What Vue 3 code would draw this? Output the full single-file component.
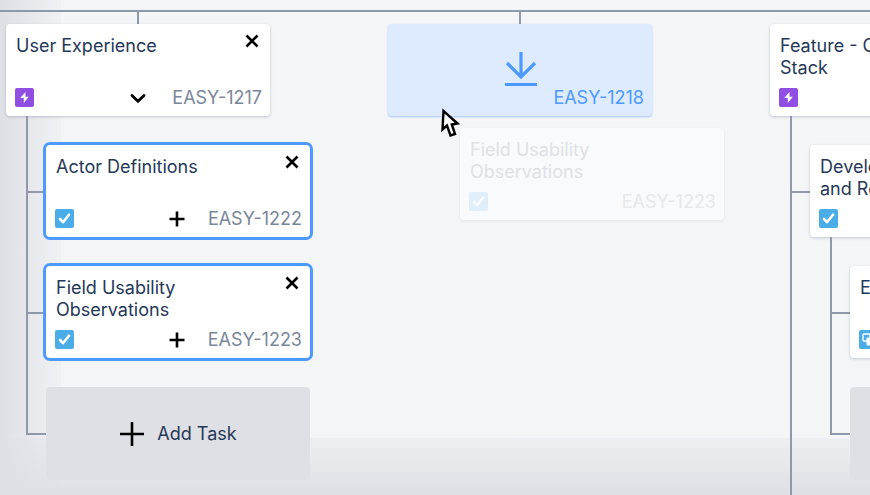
<script setup>
// Without a node the component draws the whole board; with one it draws
// that card and, below it, the tree of its children.
defineOptions({ name: 'App' })
defineProps({ node: { type: Object, default: null } })

const columns = [
  {
    title: 'User Experience', key: 'EASY-1217', type: 'epic', action: 'collapse',
    children: [
      { title: 'Actor Definitions', key: 'EASY-1222', type: 'task', action: 'add', selected: true },
      { title: 'Field Usability\nObservations', key: 'EASY-1223', type: 'task', action: 'add', selected: true },
      { kind: 'add', title: 'Add Task' },
    ],
  },
  { kind: 'drop', key: 'EASY-1218' },
  {
    title: 'Feature - Core\nStack', key: 'EASY-1219', type: 'epic', action: 'collapse', open: true,
    children: [
      {
        title: 'Develop\nand Review', key: 'EASY-1224', type: 'task', action: 'collapse',
        children: [
          { title: 'Editor', key: 'EASY-1225', type: 'subtask', action: 'add' },
          { kind: 'add', title: 'Add Task' },
        ],
      },
    ],
  },
]

const dragged = { kind: 'ghost', title: 'Field Usability\nObservations', key: 'EASY-1223', type: 'task' }
</script>

<template>
  <main v-if="!node" class="board">
    <div class="columns">
      <section v-for="column in columns" :key="column.key" class="column">
        <span class="stem"></span>
        <App :node="column" />
      </section>
    </div>
    <div class="dragged"><App :node="dragged" /></div>
    <svg class="pointer" viewBox="0 0 20 30" aria-hidden="true">
      <path d="M3.500 3 L2.500 21.500 L7 17.500 L10.500 27.500 L15 26 L11.800 16.500 L17.500 15.500 Z" fill="#fff" stroke="#000" stroke-width="2.400" />
    </svg>
  </main>

  <div v-else class="node">
    <button v-if="node.kind === 'add'" type="button" class="card add">
      <svg width="26" height="26" viewBox="0 0 26 26" aria-hidden="true">
        <path d="M13 1v24M1 13h24" stroke="#000" stroke-width="2.600" fill="none" />
      </svg>
      <span>{{ node.title }}</span>
    </button>

    <article v-else-if="node.kind === 'drop'" class="card drop">
      <svg class="download" width="34" height="36" viewBox="0 0 34 36" aria-hidden="true">
        <path d="M17 1v25M3 12L17 26 31 12M1 33.500h32" fill="none" stroke="#4c9aff" stroke-width="3.200" />
      </svg>
      <span class="key">{{ node.key }}</span>
    </article>

    <article v-else class="card" :class="{ selected: node.selected, ghost: node.kind === 'ghost' }">
      <header class="head">
        <h2 class="title">{{ node.title }}</h2>
        <button v-if="node.action" type="button" class="icon-button close" aria-label="Remove">
          <svg width="14" height="14" viewBox="0 0 14 14"><path d="M1.500 1.500l11 11M12.500 1.500l-11 11" stroke="#000" stroke-width="2.600" /></svg>
        </button>
      </header>
      <footer class="foot">
        <svg class="type" width="19" height="19" viewBox="0 0 19 19" aria-hidden="true">
          <template v-if="node.type === 'epic'">
            <rect width="19" height="19" rx="2" fill="#904ee2" />
            <path d="M10.500 4L5.200 10h3.600v5l5-6.200h-3.300z" fill="#fff" />
          </template>
          <template v-else-if="node.type === 'task'">
            <rect width="19" height="19" rx="2" fill="#4bade8" />
            <path d="M5 10l3 3.200 6-7.500" fill="none" stroke="#fff" stroke-width="2.600" stroke-linecap="round" stroke-linejoin="round" />
          </template>
          <template v-else>
            <rect width="19" height="19" rx="2" fill="#4bade8" />
            <rect x="4" y="4" width="7" height="7" rx="1" fill="none" stroke="#fff" stroke-width="1.400" />
            <rect x="7.500" y="7.500" width="8" height="8" rx="1" fill="#fff" />
          </template>
        </svg>
        <button v-if="node.action" type="button" class="icon-button" :aria-label="node.action">
          <svg v-if="node.action === 'add'" width="16" height="18" viewBox="0 0 16 18">
            <path d="M8 2.500v15M.5 10h15" stroke="#000" stroke-width="2.600" />
          </svg>
          <svg v-else width="22" height="18" viewBox="0 0 22 18">
            <path d="M5 7.500l6 5.800 6-5.800" fill="none" stroke="#000" stroke-width="2.800" stroke-linecap="round" />
          </svg>
        </button>
        <span class="key">{{ node.key }}</span>
      </footer>
    </article>

    <ul v-if="node.children" class="children" :class="{ open: node.open }">
      <li v-for="child in node.children" :key="child.title" class="child">
        <span class="rail"><span class="elbow"></span><span class="rest"></span></span>
        <div class="branch"><App :node="child" /></div>
      </li>
    </ul>
  </div>
</template>

<style>
body {
  margin: 0;
}
</style>

<style scoped>
.board {
  position: relative;
  display: flex;
  min-height: 100vh;
  box-sizing: border-box;
  padding-top: 10px;
  overflow: hidden;
  font-family: Inter, "Liberation Sans", sans-serif;
  font-size: 18px;
  line-height: 22px;
  color: #253858;
  background:
    linear-gradient(to bottom, rgba(223, 224, 229, 0.3), #dfe0e5) bottom / 100% 57px no-repeat,
    linear-gradient(to right, #dfe0e5, #f0f1f4) left / 61px 100% no-repeat,
    #f4f5f7;
}

.columns {
  display: flex;
  flex: 1 0 auto;
  gap: 118px;
  padding-left: 6px;
  border-top: 2px solid #8f99aa;
}

.column {
  display: flex;
  flex-direction: column;
  width: 264px;
}

.stem {
  align-self: center;
  width: 2px;
  height: 12px;
  background: #8f99aa;
}

.node {
  display: flex;
  flex: 1;
  flex-direction: column;
}

.card {
  display: flex;
  flex-direction: column;
  justify-content: space-between;
  box-sizing: border-box;
  width: 264px;
  min-height: 92px;
  padding: 10px 8px 7px 10px;
  border-radius: 4px;
  background: #fff;
  box-shadow: 0 1px 3px rgba(9, 30, 66, 0.22);
}

.selected {
  box-shadow: 0 0 0 3px #4c9aff;
}

.head {
  display: flex;
  justify-content: space-between;
  align-items: flex-start;
}

.title {
  margin: 0;
  padding-top: 1px;
  font-size: inherit;
  font-weight: 400;
  white-space: pre-line;
}

.icon-button {
  display: flex;
  padding: 0;
  border: 0;
  background: none;
}

.close {
  margin-right: 3px;
}

.foot {
  display: flex;
  align-items: center;
}

.type {
  margin-left: -1px;
  margin-right: auto;
}

.key {
  padding-top: 2px;
  margin-left: 23px;
  color: #7a869a;
}

.drop {
  justify-content: flex-end;
  background: #deebff;
  box-shadow: 0 1px 2px rgba(76, 154, 255, 0.5);
}

.drop .key {
  align-self: flex-end;
  color: #4c9aff;
}

.download {
  align-self: center;
  margin-bottom: -2px;
}

.add {
  flex-direction: row;
  justify-content: center;
  align-items: center;
  gap: 12px;
  padding: 10px 8px;
  min-height: 93px;
  border: 0;
  font: inherit;
  color: inherit;
  background: #dfe0e5;
  box-shadow: none;
}

.ghost {
  color: #dfe1e6;
  background: #f9fafb;
  box-shadow: 0 1px 3px rgba(9, 30, 66, 0.08);
}

.ghost .key {
  color: #e6e8eb;
}

.ghost .type {
  opacity: 0.14;
}

.children {
  display: flex;
  flex: 1;
  flex-direction: column;
  margin: 0;
  padding: 0 0 0 20px;
  list-style: none;
}

.child {
  display: flex;
}

.open > .child {
  flex: 1;
}

.rail {
  display: flex;
  flex: none;
  flex-direction: column;
  width: 20px;
}

.elbow {
  box-sizing: border-box;
  height: 77px;
  border: solid #8f99aa;
  border-width: 0 0 2px 2px;
}

.rest {
  flex: 1;
  border-left: 2px solid #8f99aa;
}

.children:not(.open) > .child:last-child > .rail > .rest {
  border-color: transparent;
}

.branch {
  padding-top: 29px;
}

.dragged {
  position: absolute;
  top: 128px;
  left: 460px;
}

.pointer {
  position: absolute;
  top: 108px;
  left: 440px;
  width: 20px;
  height: 30px;
}
</style>
